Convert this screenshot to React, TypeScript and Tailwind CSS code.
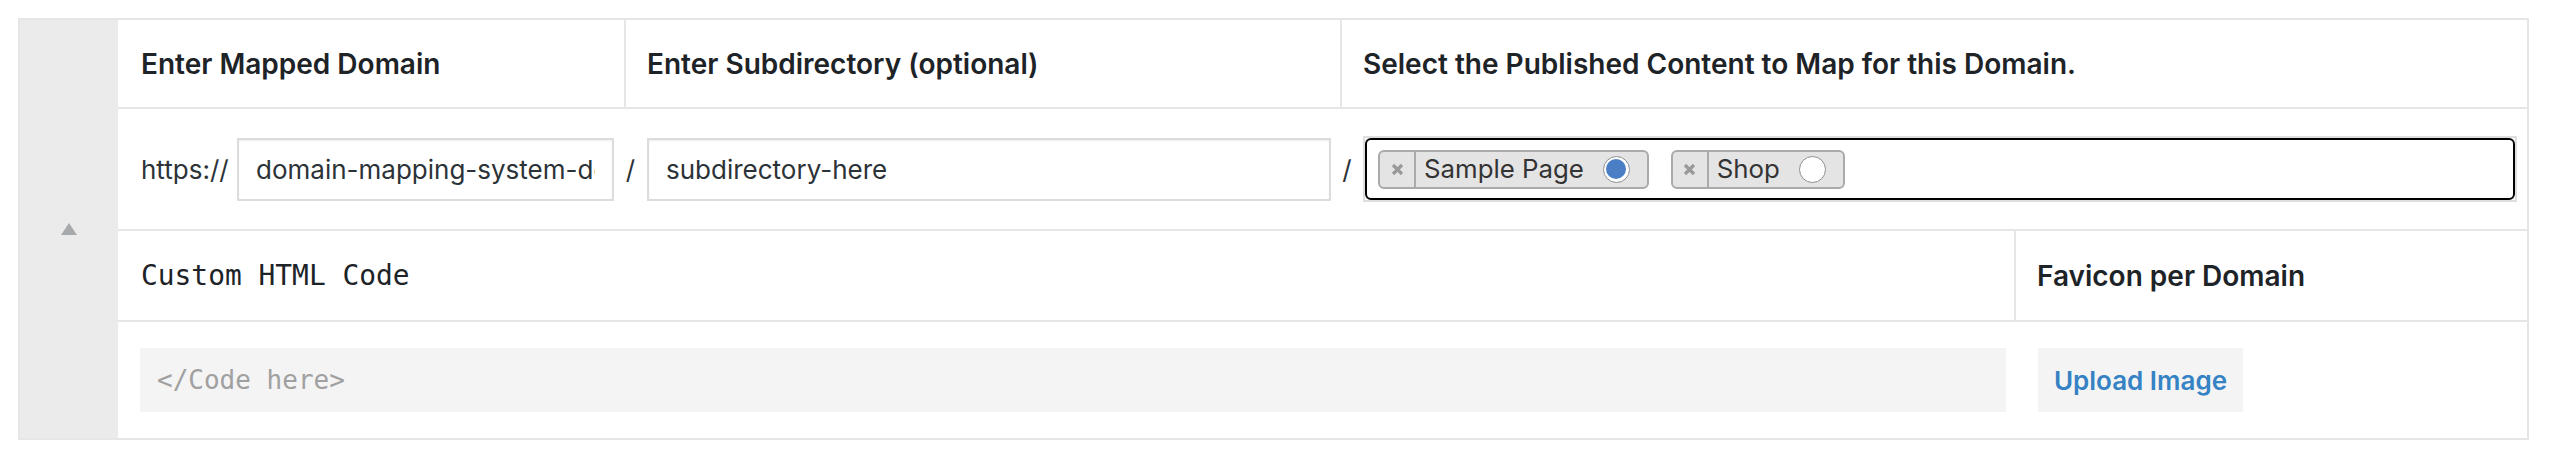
import React from 'react';

interface Chip {
  label: string;
  selected: boolean;
}

const chips: Chip[] = [
  { label: 'Sample Page', selected: true },
  { label: 'Shop', selected: false },
];

const RemoveIcon = () => (
  <svg width="13" height="13" viewBox="0 0 13 13">
    <path d="M2 2 L11 11 M11 2 L2 11" stroke="#999999" strokeWidth="3.2" strokeLinecap="butt" />
  </svg>
);

const Radio: React.FC<{ checked: boolean }> = ({ checked }) =>
  checked ? (
    <span className="flex h-[27px] w-[27px] items-center justify-center rounded-full border-[1.5px] border-[#8c8f94] bg-white">
      <span className="h-[20px] w-[20px] rounded-full bg-[#4a7fc6]" />
    </span>
  ) : (
    <span className="h-[27px] w-[27px] rounded-full border-[1.5px] border-[#8c8f94] bg-white" />
  );

const ContentChip: React.FC<{ chip: Chip }> = ({ chip }) => (
  <div className="flex h-[39px] items-center rounded-[6px] border-2 border-[#aaaaaa] bg-[#e4e4e4]">
    <span className="flex h-full w-[36px] items-center justify-center border-r-2 border-[#aaaaaa]">
      <RemoveIcon />
    </span>
    <span className="pl-[8px] text-[25.8px] leading-none text-[#333333]">{chip.label}</span>
    <span className="ml-[19px] mr-[17px] flex">
      <Radio checked={chip.selected} />
    </span>
  </div>
);

const App: React.FC = () => {
  return (
    <div className="min-h-screen bg-white pl-[18px] pt-[18px] font-[Inter,'Noto_Sans',sans-serif] text-[#1d2327]">
      <div className="flex w-[2511px] border-2 border-[#e6e6e6]">
        {/* collapse handle */}
        <div className="flex w-[98px] items-center justify-center bg-[#ebebeb]">
          <svg width="16" height="12" viewBox="0 0 16 12">
            <path d="M8 0 L16 12 L0 12 Z" fill="#a7aaad" />
          </svg>
        </div>

        <div className="flex flex-1 flex-col">
          {/* mapping header */}
          <div className="grid h-[89px] grid-cols-[508px_716px_1fr] border-b-2 border-[#e6e6e6]">
            <div className="flex items-center border-r-2 border-[#e6e6e6] px-[23px] text-[28px] font-semibold">
              Enter Mapped Domain
            </div>
            <div className="flex items-center border-r-2 border-[#e6e6e6] px-[21px] text-[28px] font-semibold">
              Enter Subdirectory (optional)
            </div>
            <div className="flex items-center px-[21px] text-[28px] font-semibold">
              Select the Published Content to Map for this Domain.
            </div>
          </div>

          {/* mapping inputs */}
          <div className="flex h-[122px] items-center border-b-2 border-[#e6e6e6] pl-[23px] pr-[10px] text-[26px] text-[#2c3338]">
            <span className="w-[86px] whitespace-nowrap">https://</span>
            <input
              readOnly
              value="domain-mapping-system-demo.com"
              className="ml-[10px] h-[63px] w-[377px] border-2 border-[#dcdcde] bg-white px-[17px] text-[26px] text-[#2c3338] shadow-[inset_0_1px_2px_rgba(0,0,0,0.07)] outline-none"
            />
            <span className="w-[33px] text-center">/</span>
            <input
              readOnly
              value="subdirectory-here"
              className="h-[63px] w-[684px] border-2 border-[#dcdcde] bg-white px-[17px] text-[26px] text-[#2c3338] shadow-[inset_0_1px_2px_rgba(0,0,0,0.07)] outline-none"
            />
            <span className="w-[32px] text-center">/</span>
            <div className="h-[66px] flex-1 border-2 border-[#dedede]">
              <div className="flex h-full items-center gap-[22px] rounded-[6px] border-2 border-black bg-white px-[11px]">
                {chips.map((chip) => (
                  <ContentChip key={chip.label} chip={chip} />
                ))}
              </div>
            </div>
          </div>

          {/* extra settings header */}
          <div className="grid h-[91px] grid-cols-[1fr_511px] border-b-2 border-[#e6e6e6]">
            <div className="flex items-center border-r-2 border-[#e6e6e6] px-[23px] font-['DejaVu_Sans_Mono',monospace] text-[27.9px]">
              Custom HTML Code
            </div>
            <div className="flex items-center px-[21px] text-[28px] font-semibold">Favicon per Domain</div>
          </div>

          {/* extra settings inputs */}
          <div className="flex h-[116px] items-center pl-[22px]">
            <div className="flex h-[64px] w-[1866px] items-center bg-[#f4f4f4] pl-[17px] font-['DejaVu_Sans_Mono',monospace] text-[26px] text-[#a0a0a0]">
              {'</Code here>'}
            </div>
            <button className="ml-[32px] flex h-[64px] w-[205px] items-center justify-center bg-[#f4f4f4] text-[26px] font-semibold text-[#3582c4]">
              Upload Image
            </button>
          </div>
        </div>
      </div>
    </div>
  );
};

export default App;
